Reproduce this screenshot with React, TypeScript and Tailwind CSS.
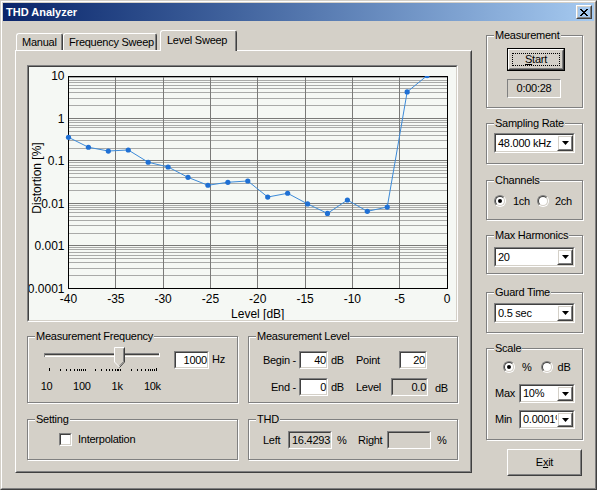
import React from 'react';

type BoxProps = { className?: string; inner?: string; children?: React.ReactNode };

// classic 3D edges
function Raised({ className = '', inner = '', children }: BoxProps) {
  return (
    <div className={`border border-t-white border-l-white border-r-[#404040] border-b-[#404040] ${className}`}>
      <div className={`w-full h-full border border-t-[#d4d0c8] border-l-[#d4d0c8] border-r-[#808080] border-b-[#808080] ${inner}`}>
        {children}
      </div>
    </div>
  );
}

function Sunken({ className = '', inner = 'bg-white', children }: BoxProps) {
  return (
    <div className={`border border-t-[#808080] border-l-[#808080] border-r-white border-b-white ${className}`}>
      <div className={`w-full h-full border border-t-[#404040] border-l-[#404040] border-r-[#d4d0c8] border-b-[#d4d0c8] ${inner}`}>
        {children}
      </div>
    </div>
  );
}

function Group({ label, className = '', children }: { label: string; className?: string; children?: React.ReactNode }) {
  return (
    <div className={`relative border border-[#808080] shadow-[inset_1px_1px_0_#fff,1px_1px_0_#fff] ${className}`}>
      <span className="absolute left-[7px] -top-[7px] bg-[#d4d0c8] px-[1px] whitespace-nowrap">{label}</span>
      {children}
    </div>
  );
}

function Combo({ value, className = '' }: { value: string; className?: string }) {
  return (
    <Sunken className={className} inner="bg-white flex">
      <span className="flex-1 min-w-0 overflow-hidden whitespace-nowrap pl-[2px] self-center">{value}</span>
      <Raised className="w-[16px] h-full shrink-0" inner="flex items-center justify-center">
        <svg width="7" height="4">
          <path d="M0 0h7L3.5 4z" fill="#000" />
        </svg>
      </Raised>
    </Sunken>
  );
}

function Radio({ checked }: { checked?: boolean }) {
  return (
    <div className="w-[12px] h-[12px] shrink-0 rounded-full border border-t-[#808080] border-l-[#808080] border-r-white border-b-white">
      <div className="w-full h-full rounded-full border border-t-[#404040] border-l-[#404040] border-r-[#d4d0c8] border-b-[#d4d0c8] bg-white flex items-center justify-center">
        {checked && <div className="w-[4px] h-[4px] rounded-full bg-black" />}
      </div>
    </div>
  );
}

function Tab({ label, className = '', selected }: { label: string; className?: string; selected?: boolean }) {
  return (
    <div className={`border-t border-l border-r border-t-white border-l-white border-r-[#404040] rounded-t-[3px] bg-[#d4d0c8] ${className}`}>
      <div className={`h-full border-r border-r-[#808080] flex items-center whitespace-nowrap ${selected ? 'pl-[6px] pb-[1px]' : 'pl-[5px]'}`}>
        {label}
      </div>
    </div>
  );
}

function CloseGlyph() {
  const rows = ['11000011', '01100110', '00111100', '00011000', '00111100', '01100110', '11000011'];
  return (
    <svg width="8" height="7" shapeRendering="crispEdges">
      {rows.map((r, y) =>
        r.split('').map((c, x) => (c === '1' ? <rect key={`${x}-${y}`} x={x} y={y} width="1" height="1" fill="#000" /> : null))
      )}
    </svg>
  );
}

// chart geometry (svg coords inside the sunken frame)
const X0 = 39.5;
const X1 = 418;
const YT = 9;
const DEC = 42.46;
const YB = YT + DEC * 5;
const yOf = (v: number) => YT + (1 - Math.log10(v)) * DEC;
const xOf = (db: number) => X0 + ((db + 40) / 40) * (X1 - X0);
const crisp = (n: number) => Math.round(n - 0.5) + 0.5;

const THD = [0.36, 0.21, 0.171, 0.181, 0.093, 0.072, 0.041, 0.0267, 0.0314, 0.0337, 0.0141, 0.0173, 0.0097, 0.0058, 0.012, 0.0065, 0.0082, 4.22, 10.2, 30];

function Chart() {
  const major: number[] = [];
  const minor: number[] = [];
  for (let d = 0; d < 5; d++) {
    const base = Math.pow(10, -d);
    major.push(yOf(base * 10));
    for (let m = 2; m < 10; m++) minor.push(yOf(base * m));
  }
  const verts = [-35, -30, -25, -20, -15, -10, -5].map(xOf);
  const pts = THD.map((v, i) => [X0 + i * ((X1 - X0) / 19), yOf(v)]);
  const yLabels = ['10', '1', '0.1', '0.01', '0.001', '0.0001'];

  return (
    <svg width="427" height="253" className="block tracking-normal" fontFamily="'Liberation Sans', Arial, sans-serif" fontSize="12">
      <defs>
        <clipPath id="plot">
          <rect x="0" y={YT} width={X1 + 0.5} height={YB - YT + 4} />
        </clipPath>
      </defs>
      <g shapeRendering="crispEdges">
        {minor.map((y, i) => (
          <line key={`mi${i}`} x1={X0} x2={X1} y1={crisp(y)} y2={crisp(y)} stroke="#a9aaa8" />
        ))}
        {major.map((y, i) => (
          <line key={`ma${i}`} x1={X0} x2={X1} y1={crisp(y)} y2={crisp(y)} stroke="#7a7a78" />
        ))}
        {verts.map((x, i) => (
          <line key={`v${i}`} x1={crisp(x)} x2={crisp(x)} y1={YT} y2={YB} stroke="#7a7a78" />
        ))}
        <rect x={crisp(X0)} y={crisp(YT)} width={Math.round(X1 - X0)} height={Math.round(YB - YT)} fill="none" stroke="#000" />
      </g>
      <g clipPath="url(#plot)">
        <polyline points={pts.map((p) => p.join(',')).join(' ')} fill="none" stroke="#3c8ad8" strokeWidth="1" />
        {pts.map(([x, y], i) => (
          <circle key={i} cx={x} cy={y} r="2.6" fill="#1f70d4" />
        ))}
      </g>
      {yLabels.map((t, i) => (
        <text key={t} x="35.5" y={YT + i * DEC + 4.3} textAnchor="end" fill="#000">
          {t}
        </text>
      ))}
      {[-40, -35, -30, -25, -20, -15, -10, -5, 0].map((db) => (
        <text key={db} x={xOf(db)} y="236" textAnchor="middle" fill="#000">
          {db}
        </text>
      ))}
      <text x={(X0 + X1) / 2} y="251" textAnchor="middle" fill="#000">
        Level [dB]
      </text>
      <text transform="translate(11.5,111) rotate(-90)" textAnchor="middle" fill="#000">
        Distortion [%]
      </text>
    </svg>
  );
}

function FreqSlider() {
  const ticks: number[] = [];
  for (let d = 0; d < 3; d++) for (let k = 1; k < 10; k++) ticks.push(20 + 35.5 * (d + Math.log10(k)));
  ticks.push(20 + 35.5 * 3);
  return (
    <svg width="141" height="28" className="block" shapeRendering="crispEdges">
      <rect x="15" y="8" width="115" height="1" fill="#808080" />
      <rect x="15" y="9" width="115" height="1" fill="#404040" />
      <rect x="15" y="11" width="115" height="1" fill="#fff" />
      <rect x="15" y="8" width="1" height="4" fill="#808080" />
      <rect x="130" y="8" width="1" height="4" fill="#fff" />
      {ticks.map((x, i) => (
        <rect key={i} x={Math.round(x)} y={i === 0 || i === ticks.length - 1 ? 23 : 24} width="1" height={i === 0 || i === ticks.length - 1 ? 3 : 2} fill="#000" />
      ))}
      <g shapeRendering="auto">
        <path d="M85 2H96V17L90.5 22.5L85 17Z" fill="#d4d0c8" />
        <path d="M85.5 17V2.5H95.5" fill="none" stroke="#fff" />
        <path d="M85.5 17L90.5 22" fill="none" stroke="#fff" />
        <path d="M95.5 2.5V17L90.5 22.5" fill="none" stroke="#404040" />
        <path d="M94.5 3.5V16.6L90.5 20.8" fill="none" stroke="#808080" />
      </g>
    </svg>
  );
}

export default function App() {
  return (
    <div className="w-[597px] h-[490px] bg-[#d4d0c8] border border-t-[#d4d0c8] border-l-[#d4d0c8] border-r-[#404040] border-b-[#404040] font-['Liberation_Sans',Arial,sans-serif] text-[11px] leading-[13px] tracking-[-0.25px] text-black select-none">
      <div className="h-full border border-t-white border-l-white border-r-[#808080] border-b-[#808080] p-px flex flex-col">
        {/* title bar */}
        <div className="h-[18px] shrink-0 flex items-center pl-[3px] pr-[2px] bg-linear-to-r from-[#0a246a] to-[#a6caf0]">
          <span className="font-bold text-white tracking-normal">THD Analyzer</span>
          <Raised className="ml-auto w-[16px] h-[14px]" inner="flex items-center justify-center">
            <CloseGlyph />
          </Raised>
        </div>

        <div className="flex flex-1">
          {/* tab control */}
          <div className="ml-[12px] mt-[9px] w-[457px] flex flex-col">
            <div className="flex items-end h-[20px]">
              <Tab label="Manual" className="ml-[1px] w-[47px] h-[17px]" />
              <Tab label="Frequency Sweep" className="w-[94px] h-[17px]" />
              <Tab label="Level Sweep" selected className="ml-[3px] w-[77px] h-[21px] -mb-px relative z-10" />
            </div>
            <Raised className="w-[457px] h-[423px]">
              <div className="pl-[10px] pt-[13px]">
                <Sunken className="w-[431px] h-[257px]" inner="bg-[#f5f8f4]">
                  <Chart />
                </Sunken>

                <div className="flex mt-[14px]">
                  <Group label="Measurement Frequency" className="w-[211px] h-[67px]">
                    <div className="flex">
                      <div className="ml-px mt-[8px] w-[141px]">
                        <FreqSlider />
                        <div className="flex mt-[7px]">
                          {['10', '100', '1k', '10k'].map((t) => (
                            <span key={t} className="w-[36px] text-center">
                              {t}
                            </span>
                          ))}
                        </div>
                      </div>
                      <Sunken className="ml-[4px] mt-[14px] w-[35px] h-[18px]" inner="bg-white flex items-center justify-end">
                        1000
                      </Sunken>
                      <span className="ml-[3px] mt-[16px]">Hz</span>
                    </div>
                  </Group>

                  <Group label="Measurement Level" className="ml-[10px] w-[210px] h-[67px]">
                    <div className="mt-[14px] flex items-center h-[18px]">
                      <span className="w-[48px] text-right pr-px">Begin -</span>
                      <Sunken className="ml-[2px] w-[29px] h-[18px]" inner="bg-white flex items-center justify-end">
                        40
                      </Sunken>
                      <span className="ml-[3px] w-[25px]">dB</span>
                      <span className="w-[43px]">Point</span>
                      <Sunken className="w-[28px] h-[18px]" inner="bg-white flex items-center justify-end">
                        20
                      </Sunken>
                    </div>
                    <div className="mt-[9px] flex items-center h-[18px]">
                      <span className="w-[48px] text-right pr-px">End -</span>
                      <Sunken className="ml-[2px] w-[29px] h-[18px]" inner="bg-white flex items-center justify-end">
                        0
                      </Sunken>
                      <span className="ml-[3px] w-[25px]">dB</span>
                      <span className="w-[35px]">Level</span>
                      <Sunken className="w-[37px] h-[18px]" inner="bg-[#d4d0c8] flex items-center justify-end">
                        0.0
                      </Sunken>
                      <span className="ml-[7px] mt-[3px]">dB</span>
                    </div>
                  </Group>
                </div>

                <div className="flex mt-[16px]">
                  <Group label="Setting" className="w-[211px] h-[41px]">
                    <div className="ml-[31px] mt-[13px] flex items-center">
                      <Sunken className="w-[13px] h-[13px]" />
                      <span className="ml-[6px]">Interpolation</span>
                    </div>
                  </Group>
                  <Group label="THD" className="ml-[10px] w-[210px] h-[41px]">
                    <div className="mt-[11px] ml-[14px] flex items-center h-[18px]">
                      <span className="w-[25px]">Left</span>
                      <Sunken className="w-[44px] h-[18px]" inner="bg-[#d4d0c8] flex items-center justify-end">
                        16.4293
                      </Sunken>
                      <span className="ml-[5px] w-[21px]">%</span>
                      <span className="w-[29px]">Right</span>
                      <Sunken className="w-[44px] h-[18px]" inner="bg-[#d4d0c8]" />
                      <span className="ml-[6px]">%</span>
                    </div>
                  </Group>
                </div>
              </div>
            </Raised>
          </div>

          {/* right column */}
          <div className="ml-[14px] mt-[14px] w-[98px] flex flex-col">
            <Group label="Measurement" className="w-[97px] h-[73px]">
              <div className="ml-[20px] mt-[12px] flex flex-col">
                <div className="w-[58px] h-[23px] border border-black">
                  <Raised className="w-full h-full" inner="p-[2px]">
                    <div className="w-full h-full border border-dotted border-black flex items-center justify-center">
                      <span>
                        <span className="underline">S</span>tart
                      </span>
                    </div>
                  </Raised>
                </div>
                <div className="mt-[8px] w-[54px] h-[19px] border border-t-[#808080] border-l-[#808080] border-r-white border-b-white flex items-center justify-center">
                  0:00:28
                </div>
              </div>
            </Group>

            <Group label="Sampling Rate" className="mt-[15px] w-[97px] h-[41px]">
              <Combo value="48.000 kHz" className="ml-[7px] mt-[9px] w-[81px] h-[20px]" />
            </Group>

            <Group label="Channels" className="mt-[16px] w-[97px] h-[40px]">
              <div className="ml-[7px] mt-[14px] flex items-center h-[12px]">
                <Radio checked />
                <span className="ml-[7px]">1ch</span>
                <div className="ml-[7px]">
                  <Radio />
                </div>
                <span className="ml-[6px]">2ch</span>
              </div>
            </Group>

            <Group label="Max Harmonics" className="mt-[15px] w-[97px] h-[39px]">
              <Combo value="20" className="ml-[7px] mt-[11px] w-[81px] h-[20px]" />
            </Group>

            <Group label="Guard Time" className="mt-[18px] w-[97px] h-[41px]">
              <Combo value="0.5 sec" className="ml-[7px] mt-[10px] w-[81px] h-[20px]" />
            </Group>

            <Group label="Scale" className="mt-[15px] w-[97px] h-[92px]">
              <div className="ml-[16px] mt-[12px] flex items-center h-[12px]">
                <Radio checked />
                <span className="ml-[7px]">%</span>
                <div className="ml-[9px]">
                  <Radio />
                </div>
                <span className="ml-[5px]">dB</span>
              </div>
              <div className="ml-[8px] mt-[11px] flex items-center h-[19px]">
                <span className="w-[24px]">Max</span>
                <Combo value="10%" className="w-[56px] h-[19px]" />
              </div>
              <div className="ml-[8px] mt-[7px] flex items-center h-[19px]">
                <span className="w-[24px]">Min</span>
                <Combo value="0.0001%" className="w-[56px] h-[19px]" />
              </div>
            </Group>

            <Raised className="mt-[9px] ml-[21px] w-[75px] h-[27px]" inner="flex items-center justify-center">
              <span>
                E<span className="underline">x</span>it
              </span>
            </Raised>
          </div>
        </div>
      </div>
    </div>
  );
}
